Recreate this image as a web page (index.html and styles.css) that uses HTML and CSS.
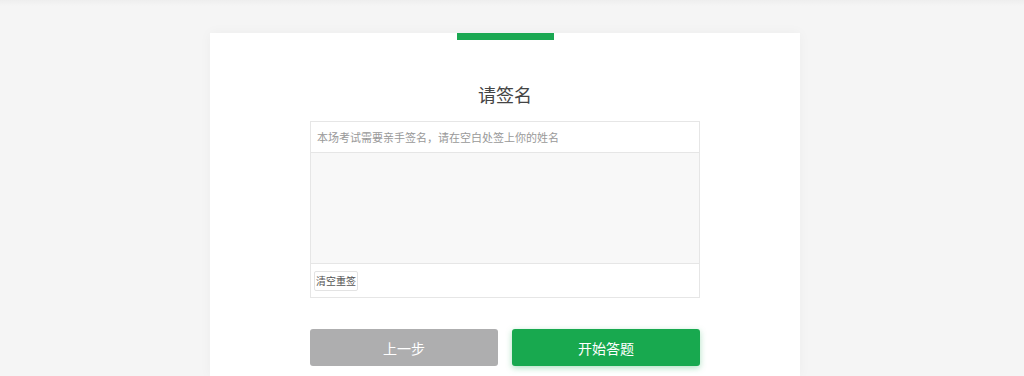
FILE: index.html
```html
<!DOCTYPE html>
<html lang="zh-CN">
<head>
    <meta charset="UTF-8">
    <meta name="viewport" content="width=device-width, initial-scale=1.0">
    <title>请签名</title>
    <link rel="stylesheet" href="styles.css">
</head>
<body>

    <div class="topbar"></div>

    <div class="page">
        <div class="card">
            <div class="progress"></div>

            <h2 class="title">请签名</h2>

            <div class="sign-box">
                <div class="sign-tip">本场考试需要亲手签名，请在空白处签上你的姓名</div>
                <div class="sign-pad"></div>
                <div class="sign-foot">
                    <button class="clear-btn">清空重签</button>
                </div>
            </div>

            <div class="actions">
                <button class="btn btn-prev">上一步</button>
                <button class="btn btn-start">开始答题</button>
            </div>
        </div>
    </div>

</body>
</html>
```

FILE: styles.css
```css
body {
    font-family: "Noto Sans CJK SC", "Liberation Sans", sans-serif;
    background-color: #f5f5f5;
    color: #333;
    margin: 0;
    padding: 0;
    height: 376px;
    overflow: hidden;
}

.topbar {
    height: 6px;
    background: linear-gradient(#eeeeee, #f5f5f5);
}

.page {
    display: flex;
    justify-content: center;
    padding-top: 27px;
    padding-right: 14px;
}

.card {
    width: 590px;
    height: 343px;
    background-color: #fff;
    box-shadow: 0 0 12px rgba(0, 0, 0, 0.04);
    display: flex;
    flex-direction: column;
    align-items: center;
}

.progress {
    width: 97px;
    height: 7px;
    background-color: #1aa852;
    margin-left: 1px;
}

.title {
    font-size: 18px;
    font-weight: normal;
    color: #444;
    margin: 41px 0 0;
    line-height: 26px;
}

.sign-box {
    width: 388px;
    margin-top: 14px;
    border: 1px solid #e6e6e6;
}

.sign-tip {
    height: 30px;
    line-height: 30px;
    padding-left: 6px;
    font-size: 11px;
    color: #999;
    border-bottom: 1px solid #e6e6e6;
}

.sign-pad {
    height: 110px;
    background-color: #f8f8f8;
    border-bottom: 1px solid #e6e6e6;
}

.sign-foot {
    height: 33px;
    display: flex;
    align-items: center;
    padding-left: 3px;
}

.clear-btn {
    font-family: inherit;
    font-size: 10px;
    color: #555;
    background-color: #fff;
    border: 1px solid #e3e3e3;
    border-radius: 2px;
    height: 20px;
    padding: 0 1px;
    cursor: pointer;
}

.actions {
    display: flex;
    gap: 14px;
    margin-top: 31px;
}

.btn {
    font-family: inherit;
    width: 188px;
    height: 37px;
    border: none;
    border-radius: 3px;
    color: #fff;
    font-size: 14px;
    cursor: pointer;
}

.btn-prev {
    background-color: #aeaeaf;
}

.btn-start {
    background-color: #18a94f;
    box-shadow: 0 2px 6px rgba(24, 169, 79, 0.35);
}
```
